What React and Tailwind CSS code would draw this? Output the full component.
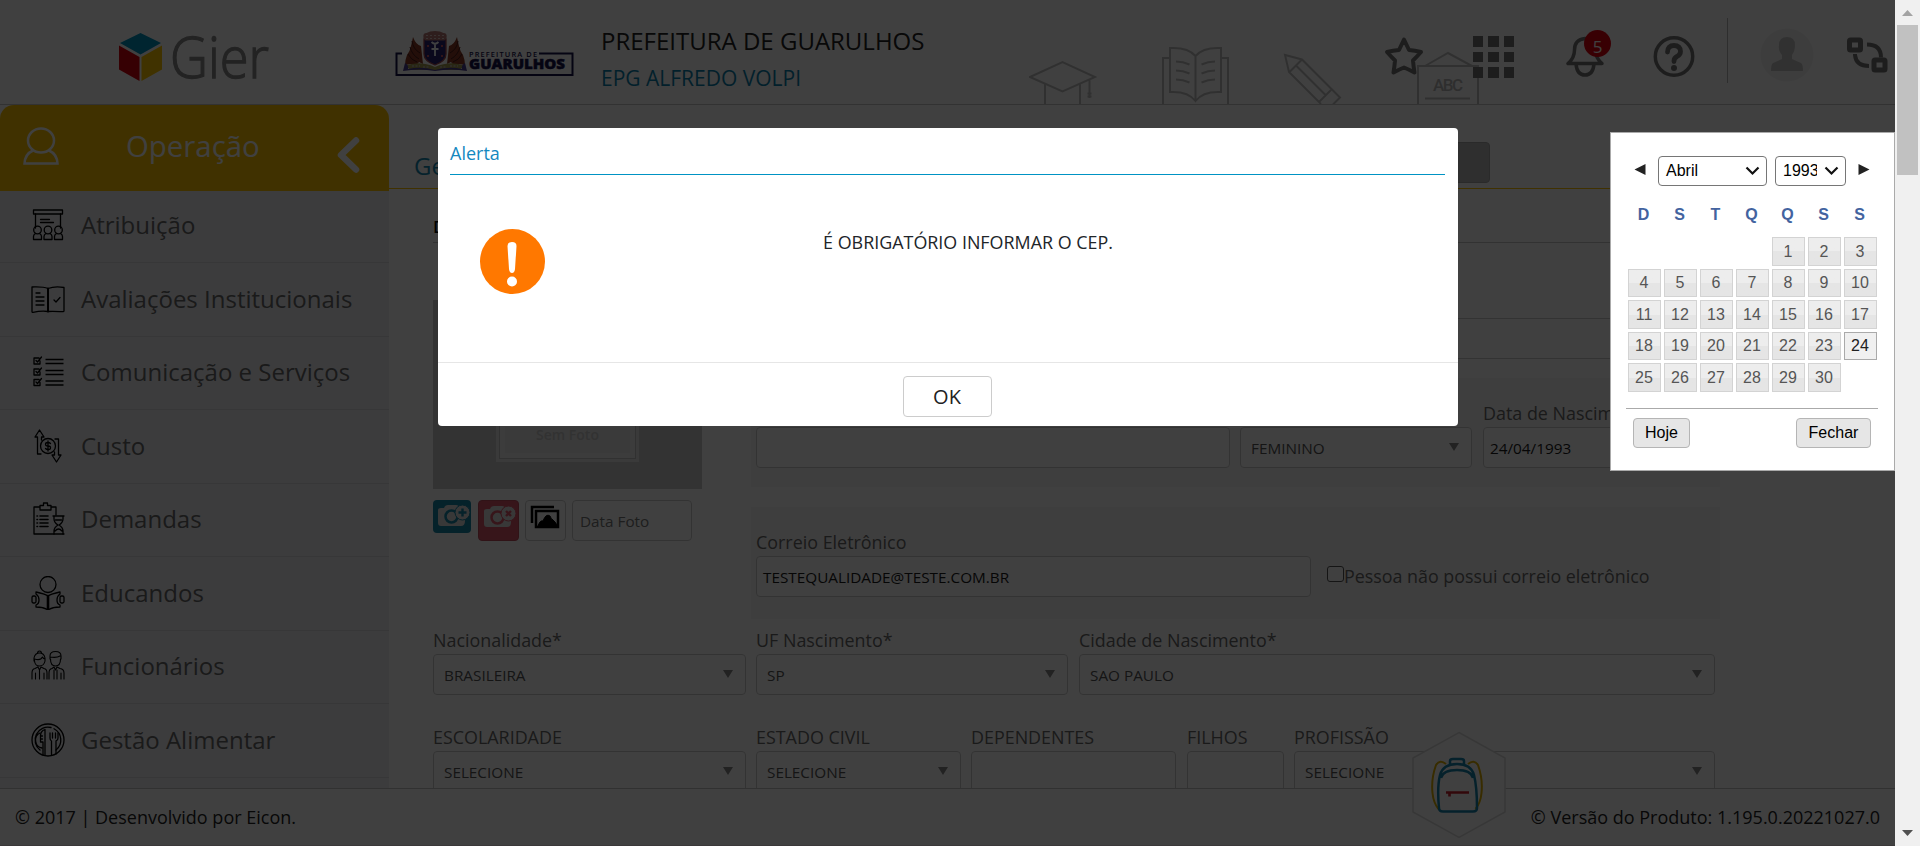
import React from "react";

const Svg = ({ w, h, className = "", children, ...rest }) => (
  <svg width={w} height={h} viewBox={`0 0 ${w} ${h}`} fill="none" className={`shrink-0 ${className}`} {...rest}>
    {children}
  </svg>
);

const line = { stroke: "#000", strokeWidth: 1.3, strokeLinejoin: "round", strokeLinecap: "round" };

const icons = {
  atribuicao: (
    <Svg w={34} h={34} {...line}>
      <rect x="2.5" y="2" width="29" height="4" />
      <path d="M4.500 6v14M29.500 6v14M9.500 11.500h9M9.500 14.500h13" />
      {[6.5, 17, 27.5].map((x) => (
        <g key={x}>
          <circle cx={x} cy="22" r="3.800" />
          <path d={`M${x - 4} 31.500v-3q0-2 2-3M${x + 4} 31.500v-3q0-2-2-3M${x - 4} 31.500h8`} />
        </g>
      ))}
    </Svg>
  ),
  avaliacoes: (
    <Svg w={34} h={34} {...line}>
      <path d="M17 6.500C12 4.500 7 5 1 5v24.500q0 1 1 .8c5-1 10-1.500 15-.8 5-.5 10 0 15 .2q1 0 1-1V5.500C27 4.500 21 5 17 6.500Z" />
      <path d="M17 6.500v23" strokeWidth="2" />
      <path d="M5 11h4M5 15h8M5 19h8M5 23h8M23 18l2 2 4-4.500" />
    </Svg>
  ),
  comunicacao: (
    <Svg w={34} h={34} {...line}>
      {[5, 16, 26.5].map((y) => (
        <g key={y}>
          <path d={`M8 ${y - 2}H3v6h6v-3M5 ${y + 0.5}l1.500 1.500 4-5`} />
          <path d={`M14.500 ${y - 0.5}h18M14.500 ${y + 3.500}h18`} strokeLinecap="butt" />
        </g>
      ))}
    </Svg>
  ),
  custo: (
    <Svg w={34} h={34} {...line}>
      <path d="M6.500 25V8H4l4.500-7 4.500 7h-2.500v3M6.500 25H10M27.500 10v16H30l-4.500 7-4.500-7h2.500v-3M27.500 10H24" />
      <circle cx="17" cy="17" r="7.500" />
      <path d="M19.500 14.500q-1-1-2.500-1-2.500 0-2.500 1.800T17 17t2.500 1.800T17 20.500q-1.500 0-2.500-1M17 12v10" />
    </Svg>
  ),
  demandas: (
    <Svg w={34} h={34} {...line}>
      <path d="M9 5H3v27h30M25 13V5h-5M9 3.500h3.500V1h4v2.500H20V8H9Z" />
      <path d="M9 14h8M9 17.500h8M9 21h8M9 24.500h8M6 14h.5M6 17.500h.5M6 21h.5M6 24.500h.5" strokeWidth="1.600" />
      <path d="M22 14h11M23 14v3q0 3.500 4 6-4 2.500-4 6v3M32 14v3q0 3.500-4 6 4 2.500 4 6v3M24.500 18h6M24 29q3.500-4 7 0" />
    </Svg>
  ),
  educandos: (
    <Svg w={34} h={34} {...line}>
      <circle cx="17" cy="8.500" r="8" />
      <path d="M17 20c-3-2-7-3-12-4v2q3 2 3 6t-3 5v2c4 0 9 1 12 3 3-2 8-3 12-3v-2q-3-1-3-5t3-6v-2c-5 1-9 2-12 4Z" />
      <path d="M17 20v14" strokeWidth="2.600" />
      <rect x="1" y="20" width="4" height="7" rx="1.500" />
      <rect x="29" y="20" width="4" height="7" rx="1.500" />
    </Svg>
  ),
  funcionarios: (
    <Svg w={34} h={34} {...line} strokeWidth="1.100">
      <path d="M3 12V9q1-5 5.500-5T14 9v3M3.500 10q6 2 8-2 1 2 2.500 2v2q-1 5-5.500 5t-5-5ZM6.500 4.500q0-2.500 2-2.500t2 2.500M1 30v-6q0-4 3-4.500l3-1.500 1.500 3 1.500-3 3 1.500q3 .5 3 4.500v6M8.500 21v9M4.500 24v6M13 24v6" />
      <path d="M19 10V7q0-4.500 5.500-4.500T30 7v3M19 8q7 1 10-1M19.500 10q0 7 5 7t5-7M18 30v-6q0-4 3-4.500l2-1.500 1.500 3 1.500-3 3 1.500q4 .5 4 4.500v6M23 21v9M26 21v9M30 24v6" />
    </Svg>
  ),
  alimentar: (
    <Svg w={34} h={34} {...line}>
      <circle cx="17" cy="17" r="16" />
      <path d="M9 27A12.800 12.800 0 0 1 20 4.500M23 5.700a12.800 12.800 0 0 1 2 21.300M11 25a8 8 0 0 1-2-15" />
      <path d="M12 32V19H9.500v-6q0-5 4.500-6.500V32M9.500 13h2M9.500 16h2M19 10v5q0 2.500 1.500 3V32M27 10v5q0 2.500-2 3V31M21.500 10v5M24.500 10v5" />
    </Svg>
  ),
};

const menu = [
  ["Atribuição", "atribuicao"],
  ["Avaliações Institucionais", "avaliacoes"],
  ["Comunicação e Serviços", "comunicacao"],
  ["Custo", "custo"],
  ["Demandas", "demandas"],
  ["Educandos", "educandos"],
  ["Funcionários", "funcionarios"],
  ["Gestão Alimentar", "alimentar"],
];

function Header() {
  return (
    <header className="relative flex h-[105px] shrink-0 border-b border-[#c8c8c8] bg-white">
      <div className="flex w-[395px] shrink-0 pl-[119px] pt-[11px]">
        <Svg w={170} h={90}>
          <path d="M21.500 22 42 32 21.500 43.500 1 32Z" fill="#0093bf" />
          <path d="M0 34.500 20.500 46v24L0 58.500Z" fill="#d7000f" />
          <path d="M43 34.500 22.500 46v24L43 58.500Z" fill="#ffc800" />
          <text x="51" y="66.500" fontSize="57" fontWeight="300" fill="#8a8a8a" stroke="#8a8a8a" strokeWidth="1.300" textLength="99" lengthAdjust="spacingAndGlyphs" fontFamily="Open Sans, sans-serif">
            Gier
          </text>
        </Svg>
      </div>
      <div className="flex w-[206px] shrink-0 pt-[31px]">
        <Svg w={180} h={46}>
          <path d="M7 22.500H1.500V44h176V22.500H144" stroke="#14104a" strokeWidth="2" />
          <path d="M26 15q-5-1-8-9-1 5-2 9-1 5-4 9-2 5-2 10l6-1 4 3 4-5 4 2ZM54 15q5-1 8-9 1 5 2 9 1 5 4 9 2 5 2 10l-6-1-4 3-4-5-4 2Z" fill="#8a3a24" />
          <path d="M17 10q1 8 8 12M15 16q2 8 9 12M13 23q3 6 9 8M63 10q-1 8-8 12M65 16q-2 8-9 12M67 23q-3 6-9 8" stroke="#4a1a18" />
          <path d="M10 35q14-6 30 1 16-7 30-1l-6 4H16Z" fill="#a39a50" />
          <path d="M10 32q4 2 3 6 13-3 27 1 14-4 27-1-1-4 3-6l2 8q-16-3-32 0-16-3-32 0Z" fill="#4a3c90" />
          <path d="M17 35h8M28 36h7M45 36h7M55 35h8" stroke="#c8c0d8" strokeDasharray="2 1.500" />
          <path d="M29 8h22v15q0 7-11 11-11-4-11-11Z" fill="#2a2070" stroke="#a04a50" strokeWidth="1.300" />
          <path d="M28.500 7q-1-5 3-5 3-2 8.500-2t8.500 2q4 0 3 5l-2 2.500H30.500Z" fill="#b87a74" />
          <path d="M31 4.500h18M31 7.500h18" stroke="#e0c8c4" strokeDasharray="2 2" />
          <path d="M40 13v12M36.500 18h7M36.500 11q3.500 3.500 7 0" stroke="#fff" strokeWidth="1.800" />
          <path d="M33 14v2M47 14v2M33 24v2M47 24v2" stroke="#c05060" strokeWidth="2" />
          <text x="74" y="25.800" fontSize="7.400" fontWeight="600" fill="#14104a" textLength="68" fontFamily="Open Sans, sans-serif">PREFEITURA DE</text>
          <text x="74" y="38" fontSize="14" fontWeight="800" fill="#14104a" stroke="#14104a" strokeWidth="0.500" textLength="96" lengthAdjust="spacingAndGlyphs" fontFamily="Open Sans, sans-serif">GUARULHOS</text>
        </Svg>
      </div>
      <div className="flex w-[428px] shrink-0 flex-col pt-[23px]">
        <div className="whitespace-nowrap text-[24px] leading-[36px] text-[#222]">PREFEITURA DE GUARULHOS</div>
        <div className="whitespace-nowrap text-[21px] leading-[39px] text-[#0b80ac]">EPG ALFREDO VOLPI</div>
      </div>
      <Svg w={460} h={104} stroke="#c0c0c0" strokeWidth="2">
        <path d="M1 77 33.500 62 66 77 33.500 91.500ZM16 84v20M51 84v20M60.500 79v19M58.500 93.500h4M58.500 96.500h4" />
        <path d="M140 58h-6v46M192 58h7v46M141 48q18-1 25.500 8Q174 47 192 48v44q-18-1-25.500 9-7.500-10-25.500-9ZM166.500 56v45M147 61.500q7 0 13.500 3M147 70.500q7 0 13.500 3M147 79.500q7 0 13.500 3M186 61.500q-7 0-13.500 3M186 70.500q-7 0-13.500 3M186 79.500q-7 0-13.500 3" />
        <path d="m292 104-32-32-4-17 17 4.500 38 38-7 7M260.500 72l12.500-12.500M267 65.500l29.500 29.500M303 89l-13 13" />
        <path d="M389 104V66h60v38M396 66l23-13 24 13M396 98.500h45" />
        <text x="419" y="91" textAnchor="middle" fontSize="17" stroke="none" fill="#b8b8b8" fontWeight="500" textLength="30" fontFamily="Roboto, sans-serif">ABC</text>
      </Svg>
      <div className="absolute inset-y-0 right-0 flex items-start pr-[6px]">
        <Svg w={42} h={42} className="mt-[35px] mr-[48px]" stroke="#757575" strokeWidth="4" strokeLinejoin="round">
          <path d="m21 4.500 5 10.500q6 .5 12 2-4 4.500-8 8.500.5 6 1.500 12-5.500-3-10.500-5-5 2-10.500 5 1-6 1.500-12-4-4-8-8.500 6-1.500 12-2Z" />
        </Svg>
        <div className="mt-[36px] grid grid-cols-3 gap-[5px]">
          {Array.from({ length: 9 }, (_, i) => (
            <span key={i} className="h-[10.500px] w-[10.500px] bg-[#757575]" />
          ))}
        </div>
        <div className="relative ml-[52px] mt-[36px]">
          <Svg w={38} h={42} stroke="#757575" strokeWidth="3.500" strokeLinejoin="round">
            <path d="M19 2.500Q8.500 3.500 8.500 14q0 8-6.500 13.500h34q-6.500-5.500-6.500-13.500Q29.500 3.500 19 2.500ZM10 28q1 11 9 11t9-11" />
          </Svg>
          <span className="absolute left-[18px] top-[-6px] flex h-[27px] w-[27px] items-center justify-center rounded-full bg-[#e0000f] pt-[5px] text-[17px] leading-none text-white">5</span>
        </div>
        <Svg w={42} h={42} className="ml-[49px] mt-[36px]">
          <circle cx="21" cy="20.500" r="18.700" stroke="#757575" strokeWidth="3.500" />
          <path d="M14.500 16q0-6.500 6.500-6.500t6.500 6q0 3-3.500 5-3 1.500-3 4.500v.5" stroke="#757575" strokeWidth="4.800" strokeLinecap="round" />
          <circle cx="21" cy="32" r="3" fill="#757575" />
        </Svg>
        <span className="ml-[32px] mt-[18px] h-[65px] w-px bg-[#b8b8b8]" />
        <Svg w={54} h={54} className="ml-[32px] mt-[28px]">
          <circle cx="27" cy="27" r="26.500" fill="#f4f4f4" />
          <path d="M27 9q8 0 8 8 0 6-3 10v4l9 4q2 1 2 8H11q0-7 2-8l9-4v-4q-4-4-3-10 0-8 8-8Z" fill="#c4c4c4" />
        </Svg>
        <Svg w={42} h={38} className="ml-[33px] mt-[37px]" stroke="#757575">
          <rect x="2.500" y="3" width="11" height="10" rx="1" strokeWidth="5" />
          <rect x="27" y="23" width="11" height="10" rx="1" strokeWidth="5" />
          <path d="M8 17v1q1 11 14 11M20 7.500q14 0 14 13" strokeWidth="4" />
        </Svg>
      </div>
    </header>
  );
}

function Sidebar() {
  return (
    <nav className="flex w-[389px] shrink-0 flex-col overflow-hidden bg-[#eef0f4]">
      <div className="bg-white">
        <div className="flex h-[86px] items-start rounded-t-[14px] bg-[#ffc400] pl-[23px]">
          <Svg w={36} h={38} className="mt-[22px]" stroke="#fff" strokeWidth="2.500">
            <ellipse cx="18" cy="13.500" rx="13" ry="12" />
            <path d="M10 23.500Q2 27 1.500 36.500h33Q34 27 26 23.500" />
          </Svg>
          <div className="ml-[67px] mt-[20px] w-[137px] whitespace-nowrap text-[29.400px] leading-[43px] text-white">Operação</div>
          <Svg w={26} h={40} className="ml-[72px] mt-[30px]" stroke="#fff" strokeWidth="6.500" strokeLinecap="round" strokeLinejoin="round">
            <path d="M21 5.500 6 20l15 14.500" />
          </Svg>
        </div>
      </div>
      {menu.map(([label, icon], i) => (
        <div key={label} className={`flex shrink-0 items-center border-b border-[#d9dbe0] pl-[31px] ${i === 0 ? "h-[72px] pb-[3px]" : "h-[73.500px] pb-px"}`}>
          {icons[icon]}
          <span className="ml-[16px] whitespace-nowrap text-[24px] leading-[36px] text-[#6a6a6a]">{label}</span>
        </div>
      ))}
    </nav>
  );
}

const Field = ({ label, value, select, className, input }) => (
  <div className={`flex shrink-0 flex-col ${className}`}>
    <label className="h-[27px] whitespace-nowrap text-[17.900px] leading-[27px] text-[#6a6a6a]">{label}</label>
    <div className={`flex h-[41px] items-center justify-between rounded-[4px] border border-[#ccc] bg-white pr-[12px] ${input ? "pl-[6px]" : "pl-[10px]"}`}>
      <span className={`mt-px whitespace-nowrap text-[15.300px] ${input ? "text-[#1a1a1a]" : "text-[#555]"}`}>{value}</span>
      {select && (
        <Svg w={10} h={8} className="mb-[2px]">
          <path d="M0 0h10L5 8Z" fill="#888" />
        </Svg>
      )}
    </div>
  </div>
);

const Camera = ({ remove }) => (
  <Svg w={32} h={24} className="ml-[5px] mt-[4px]">
    <path d="M0 6q0-2 3-2h3q1-3 4-3h8q3 0 3 3h6v13q0 5-4 5H3q-3 0-3-3Z" fill="#ddd" />
    <circle cx="13.500" cy="12.500" r="6" stroke={remove ? "#d9566a" : "#1786a8"} strokeWidth="2.500" />
    <circle cx="24.500" cy="8.500" r="7.500" fill="#ddd" stroke={remove ? "#d9566a" : "#1786a8"} />
    <path d={remove ? "m22 6 5 5M27 6l-5 5" : "M24.500 4.500v8M20.500 8.500h8"} stroke={remove ? "#d9566a" : "#1786a8"} strokeWidth="2.400" />
  </Svg>
);

function Content() {
  return (
    <main className="flex min-w-0 flex-1 flex-col overflow-hidden bg-white">
      <div className="flex h-[84px] shrink-0 items-start justify-between border-b border-[#ffc400] pl-[25px] pr-[405px]">
        <h1 className="mt-[43px] text-[24px] leading-[36px] text-[#1688b0]">Gerenciar</h1>
        <span className="mt-[37px] h-[41px] w-[120px] rounded-[4px] border border-[#a8a8a8] bg-[#bdbdbd]" />
      </div>
      <div className="ml-[44px] flex h-[54px] w-[1282px] shrink-0 items-end border-b border-[#c8c8c8] pb-[3px]">
        <h2 className="text-[17px] font-semibold leading-[24px] text-black">Dados</h2>
      </div>
      <div className="flex h-[376px] shrink-0 pl-[44px]">
        <div className="w-[318px] shrink-0 pt-[57px]">
          <div className="flex h-[189px] w-[269px] justify-center bg-[#cbcbcb]">
            <div className="h-[162px] w-[143px] bg-[#e8e8e8] p-[3px]">
              <div className="flex h-full items-end border border-[#c4c4c4] bg-[#ededed] p-[5px]">
                <div className="w-full bg-[#e6e6e6] pb-[10px] text-center text-[14px] font-semibold leading-[16px] text-[#c6c6c6]">Sem Foto</div>
              </div>
            </div>
          </div>
          <div className="mt-[11px] flex items-start">
            <span className="h-[33px] w-[38px] rounded-[4px] bg-[#1786a8]"><Camera /></span>
            <span className="ml-[7px] h-[41px] w-[41px] rounded-[4px] border border-[#c04b5e] bg-[#d9566a]"><Camera remove /></span>
            <span className="ml-[6px] h-[41px] w-[41px] rounded-[4px] border border-[#ccc]">
              <Svg w={30} h={24} className="ml-[4px] mt-[4px]" stroke="#000" strokeWidth="2.500">
                <path d="M2 18V2h22" />
                <path d="M6 6h22v16H6Z" />
                <path d="M8 21q2-6 5-5 3-8 7-5 1 3 3 4 3 2 4 6Z" fill="#000" strokeWidth="1" />
              </Svg>
            </span>
            <span className="ml-[6px] flex h-[41px] w-[120px] items-center rounded-[4px] border border-[#ccc] pl-[7px] pt-[2px] text-[15.300px] text-[#777]">Data Foto</span>
          </div>
        </div>
        <div className="w-[969px] shrink-0 pt-[48px]">
          <Field label="Nome" input className="ml-[5px] w-[959px]" />
          <div className="mt-[19px] flex h-[109px] bg-[#f6f6f6] pl-[5px] pt-[22px]">
            <Field label="Nome Social" input className="w-[474px]" />
            <Field label="Sexo" value="FEMININO" select className="ml-[10px] w-[232px]" />
            <Field label="Data de Nascimento*" value="24/04/1993" input className="ml-[11px] w-[232px]" />
          </div>
          <div className="mt-[20px] flex h-[112px] bg-[#f6f6f6] pl-[5px] pt-[22px]">
            <Field label="Correio Eletrônico" value="TESTEQUALIDADE@TESTE.COM.BR" input className="w-[555px]" />
            <div className="ml-[16px] mt-[34px] flex h-[27px] items-start">
              <span className="mt-[3px] h-[16px] w-[17px] rounded-[3px] border border-[#555] bg-white" />
              <span className="whitespace-nowrap text-[17.850px] leading-[27px] text-[#6a6a6a]">Pessoa não possui correio eletrônico</span>
            </div>
          </div>
        </div>
      </div>
      <div className="mt-[8px] flex shrink-0 pl-[44px]">
        <Field label="Nacionalidade*" value="BRASILEIRA" select className="w-[313px]" />
        <Field label="UF Nascimento*" value="SP" select className="ml-[10px] w-[312px]" />
        <Field label="Cidade de Nascimento*" value="SAO PAULO" select className="ml-[11px] w-[636px]" />
      </div>
      <div className="mt-[29px] flex shrink-0 pl-[44px]">
        <Field label="ESCOLARIDADE" value="SELECIONE" select className="w-[313px]" />
        <Field label="ESTADO CIVIL" value="SELECIONE" select className="ml-[10px] w-[205px]" />
        <Field label="DEPENDENTES" className="ml-[10px] w-[205px]" />
        <Field label="FILHOS" className="ml-[11px] w-[97px]" />
        <Field label="PROFISSÃO" value="SELECIONE" select className="ml-[10px] w-[421px]" />
      </div>
    </main>
  );
}

function Footer() {
  return (
    <footer className="relative flex h-[58px] shrink-0 items-center justify-between border-t border-b border-t-[#c4c4c4] border-b-[#ecdde2] bg-white px-[15px] text-[18px] text-[#222]">
      <span>© 2017 | Desenvolvido por Eicon.</span>
      <span>© Versão do Produto: 1.195.0.20221027.0</span>
      <Svg w={94} h={108} className="absolute left-[1412px] top-[-58px]">
        <path d="M47 1.500 93 27v54L47 106.500 1 81V27Z" fill="#fff" stroke="#dcdcdc" strokeWidth="1.500" />
        <g strokeWidth="2.500">
          <path d="M34 33q-6-5-10 1-5 14-3.500 28 1 10 6 16M56 33q6-5 10 1 5 14 3.500 28-1 10-6 16" stroke="#dfb000" strokeWidth="2" />
          <path d="M27 77q-2-21 1-33 3-11 17-11t17 11q3 12 3 33 0 3.500-4 3.500H31q-4 0-4-3.500ZM29 47q2-8 16-8t16 8M38 33v-3q0-2 3-2h8q3 0 3 2v3" stroke="#1583ad" />
          <path d="M34 61.500h23M37.500 61v4.500" stroke="#c8202c" strokeWidth="2.600" />
        </g>
      </Svg>
    </footer>
  );
}

function AlertModal() {
  return (
    <div className="absolute left-[438px] top-[128px] flex h-[298px] w-[1020px] flex-col rounded-[4px] bg-white">
      <div className="mx-[12px] mr-[13px] flex h-[47px] shrink-0 items-start border-b border-[#0093c4] pt-[12px] text-[18px] leading-[27px] text-[#1488bf]">Alerta</div>
      <div className="flex h-[187px] shrink-0 pl-[42px] pt-[54px]">
        <Svg w={65} h={65}>
          <circle cx="32.500" cy="32.500" r="32.500" fill="#ff7800" />
          <path d="M27.500 17q0-4 4.500-4t4.500 4l-1.500 23q-.5 4-3 4t-3-4Z" fill="#fff" />
          <circle cx="32" cy="52.500" r="5" fill="#fff" />
        </Svg>
        <div className="ml-[5px] w-[836px] text-center text-[17.900px] leading-[27px] text-[#212529]">É OBRIGATÓRIO INFORMAR O CEP.</div>
      </div>
      <div className="flex flex-1 items-start justify-center border-t border-[#e6e6e6] pr-[2px] pt-[13px]">
        <button className="h-[41px] w-[89px] rounded-[4px] border border-[#ccc] bg-white text-[20px] text-[#222]">OK</button>
      </div>
    </div>
  );
}

const Chevron = () => (
  <Svg w={15} h={10} stroke="#111" strokeWidth="2.200">
    <path d="m1.500 1.500 6 6 6-6" />
  </Svg>
);

function Calendar() {
  const cells = [null, null, null, null, ...Array.from({ length: 30 }, (_, i) => i + 1)];
  return (
    <div className="absolute left-[1610px] top-[132px] flex h-[339px] w-[285px] flex-col border border-[#aaa] bg-white px-[15px] font-['Liberation_Sans',sans-serif] text-[16px]">
      <div className="flex pl-[8px] pt-[23px]">
        <Svg w={12} h={13} className="mt-[7px]"><path d="M11.500 1v11L.5 6.500Z" fill="#222" /></Svg>
        <div className="ml-[12px] flex h-[30px] w-[109px] items-center justify-between rounded-[4px] border border-[#767676] pl-[7px] pr-[6px] text-black">
          Abril <Chevron />
        </div>
        <div className="ml-[8px] flex h-[30px] w-[71px] items-center justify-between rounded-[4px] border border-[#767676] pl-[7px] pr-[6px] text-black">
          <span className="w-[34px] overflow-hidden">1993</span> <Chevron />
        </div>
        <Svg w={12} h={13} className="ml-[12px] mt-[7px]"><path d="M.5 1v11l11-5.500Z" fill="#222" /></Svg>
      </div>
      <div className="mt-[17px] grid h-[24px] grid-cols-[repeat(7,33px)] gap-x-[3px] pl-px text-center font-bold leading-[24px] text-[#43639f]">
        {["D", "S", "T", "Q", "Q", "S", "S"].map((d, i) => <span key={i}>{d}</span>)}
      </div>
      <div className="mt-[10px] grid grid-cols-[repeat(7,33px)] gap-x-[3px] gap-y-[3px] pl-[2px]">
        {cells.map((d, i) =>
          d === null ? (
            <span key={i} />
          ) : (
            <span
              key={i}
              className={`flex h-[28.500px] items-center justify-center border pr-px pt-px ${
                d === 24
                  ? "border-[#aaa] bg-[#f0f0f0] text-[#212121]"
                  : "border-[#d3d3d3] bg-linear-to-b from-[#ededed] from-50% to-[#e5e5e5] to-50% text-[#555]"
              }`}
            >
              {d}
            </span>
          )
        )}
      </div>
      <div className="mt-[16px] mr-px flex justify-between border-t border-[#aaa] pl-[7px] pr-[7px] pt-[9px]">
        <button className="h-[30px] w-[57px] rounded-[4px] border border-[#b5b5b5] bg-[#e6e6e6] text-black">Hoje</button>
        <button className="h-[30px] w-[75px] rounded-[4px] border border-[#b5b5b5] bg-[#e6e6e6] text-black">Fechar</button>
      </div>
    </div>
  );
}

export default function App() {
  return (
    <div className="relative flex h-[846px] w-[1920px] overflow-hidden bg-white font-['Open_Sans',sans-serif]">
      <div className="relative flex w-[1895px] shrink-0 flex-col">
        <Header />
        <div className="flex min-h-0 flex-1">
          <Sidebar />
          <Content />
        </div>
        <Footer />
        <div className="absolute inset-0 bg-black/75" />
        <AlertModal />
        <Calendar />
      </div>
      <div className="flex flex-1 flex-col items-center justify-between bg-[#f0f0f0] pb-[10px] pt-[10px]">
        <div className="flex flex-col items-center gap-[9px]">
          <Svg w={11} h={6}><path d="M0 6h11L5.500 0Z" fill="#a3a3a3" /></Svg>
          <div className="h-[150px] w-[21px] bg-[#c1c1c1]" />
        </div>
        <Svg w={11} h={6}><path d="M0 0h11L5.500 6Z" fill="#505050" /></Svg>
      </div>
    </div>
  );
}
